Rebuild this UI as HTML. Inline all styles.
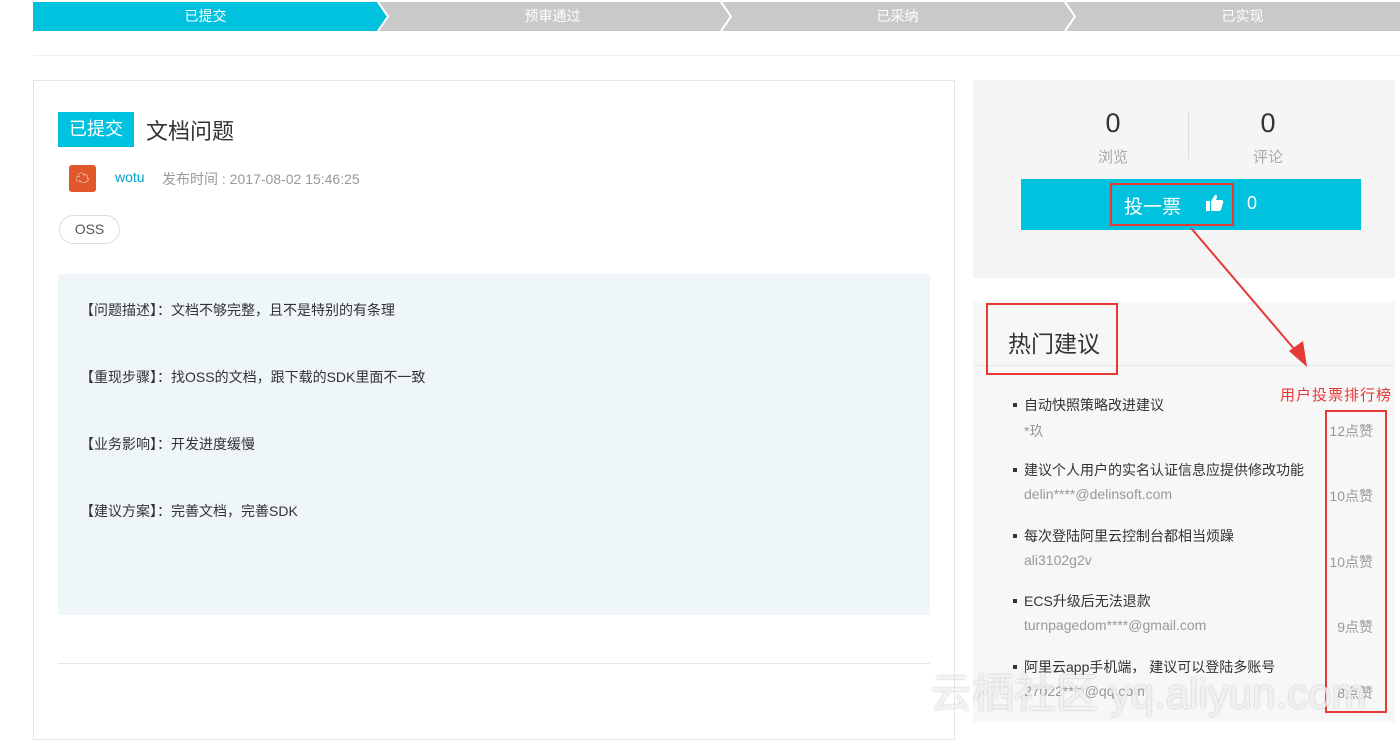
<!DOCTYPE html><html><head><meta charset="utf-8"><style>
*{margin:0;padding:0;box-sizing:border-box}
body{width:1400px;height:720px;overflow:hidden;background:#fff;font-family:"Liberation Sans","Noto Sans CJK SC",sans-serif;position:relative;color:#333}
.a{position:absolute}
.step{top:2px;height:29px;color:#fff;font-size:14px;line-height:29px;text-align:center}
.it{position:absolute;left:1024px;font-size:14px;color:#333}
.it:before{content:"";position:absolute;left:-11px;top:8px;width:4px;height:4px;background:#333}
.us{position:absolute;left:1024px;font-size:14px;color:#999}
.ct{position:absolute;right:27px;font-size:14px;color:#999}
.d{position:absolute;left:80px;font-size:14px;color:#333}
</style></head><body>
<svg class="a" style="left:33px;top:2px" width="1367" height="29">
<rect x="0" y="0" width="1367" height="29" fill="#c9c9c9"/>
<polygon points="0,0 345,0 355,14.5 345,29 0,29" fill="#00c1de"/>
<polyline points="345,0 355,14.5 345,29" fill="none" stroke="#fff" stroke-width="2"/>
<polyline points="688,0 698,14.5 688,29" fill="none" stroke="#fff" stroke-width="2"/>
<polyline points="1032,0 1042,14.5 1032,29" fill="none" stroke="#fff" stroke-width="2"/>
</svg>
<div class="a step" style="left:33px;width:345px">已提交</div>
<div class="a step" style="left:380px;width:345px">预审通过</div>
<div class="a step" style="left:725px;width:345px">已采纳</div>
<div class="a step" style="left:1070px;width:345px">已实现</div>
<div class="a" style="left:33px;top:55px;width:1367px;height:1px;background:#eee"></div>

<div class="a" style="left:33px;top:80px;width:922px;height:660px;border:1px solid #e6e6e6"></div>
<div class="a" style="left:58px;top:112px;width:76px;height:35px;background:#00c1de;color:#fff;font-size:18px;line-height:35px;text-align:center">已提交</div>
<div class="a" style="left:146px;top:114px;font-size:22px;color:#333">文档问题</div>
<div class="a" style="left:69px;top:165px;width:27px;height:27px;background:#e0572a;border-radius:3px;color:#fff;font-size:14px;text-align:center;line-height:27px">☁</div>
<div class="a" style="left:115px;top:169px;font-size:14px;color:#00a2ca">wotu</div>
<div class="a" style="left:162px;top:169px;font-size:14px;color:#999">发布时间 : 2017-08-02 15:46:25</div>
<div class="a" style="left:59px;top:215px;width:61px;height:29px;border:1px solid #ddd;border-radius:15px;font-size:14px;line-height:27px;text-align:center;color:#555">OSS</div>
<div class="a" style="left:58px;top:274px;width:872px;height:341px;background:#eef6fa"></div>
<div class="d" style="top:300px">【问题描述】：文档不够完整，且不是特别的有条理</div>
<div class="d" style="top:367px">【重现步骤】：找OSS的文档，跟下载的SDK里面不一致</div>
<div class="d" style="top:434px">【业务影响】：开发进度缓慢</div>
<div class="d" style="top:501px">【建议方案】：完善文档，完善SDK</div>
<div class="a" style="left:58px;top:663px;width:872px;height:1px;background:#e6e6e6"></div>

<div class="a" style="left:973px;top:80px;width:422px;height:198px;background:#f5f5f5"></div>
<div class="a" style="left:1060px;top:108px;width:106px;text-align:center;font-size:27px;color:#333">0</div>
<div class="a" style="left:1060px;top:146px;width:106px;text-align:center;font-size:15px;color:#aaa">浏览</div>
<div class="a" style="left:1188px;top:111px;width:1px;height:48px;background:#ddd"></div>
<div class="a" style="left:1215px;top:108px;width:106px;text-align:center;font-size:27px;color:#333">0</div>
<div class="a" style="left:1215px;top:146px;width:106px;text-align:center;font-size:15px;color:#aaa">评论</div>
<div class="a" style="left:1021px;top:179px;width:340px;height:51px;background:#00c1de"></div>
<div class="a" style="left:1110px;top:183px;width:124px;height:43px;border:2px solid #e53935"></div>
<div class="a" style="left:1124px;top:192px;font-size:19px;color:#fff">投一票</div>
<svg class="a" style="left:1205px;top:193px" width="20" height="20" viewBox="0 0 20 20"><rect x="1" y="8" width="4" height="10" fill="#fff"/><path d="M6 8 L10 2 Q12 1 12 4 L11 7 L17 7 Q19 8 18 10 L16 17 Q15 18 13 18 L6 18 Z" fill="#fff"/></svg>
<div class="a" style="left:1247px;top:193px;font-size:18px;color:#fff">0</div>

<div class="a" style="left:973px;top:302px;width:422px;height:420px;background:#f7f7f7"></div>
<div class="a" style="left:973px;top:365px;width:422px;height:1px;background:#e8e8e8"></div>
<div class="a" style="left:986px;top:303px;width:132px;height:72px;border:2px solid #e53935"></div>
<div class="a" style="left:1008px;top:325px;font-size:23px;color:#333">热门建议</div>
<svg class="a" style="left:1185px;top:225px" width="130" height="145"><line x1="6" y1="3" x2="116" y2="132" stroke="#e53935" stroke-width="2"/><polygon points="122,142 104,126 118,116" fill="#e53935"/></svg>
<div class="a" style="left:1280px;top:384px;font-size:15px;color:#e53935;letter-spacing:1px">用户投票排行榜</div>
<div class="a" style="left:1325px;top:410px;width:62px;height:303px;border:2px solid #e53935"></div>
<div class="it" style="top:395px">自动快照策略改进建议</div><div class="us" style="top:421px">*玖</div><div class="ct" style="top:421px">12点赞</div>
<div class="it" style="top:460px">建议个人用户的实名认证信息应提供修改功能</div><div class="us" style="top:486px">delin****@delinsoft.com</div><div class="ct" style="top:486px">10点赞</div>
<div class="it" style="top:526px">每次登陆阿里云控制台都相当烦躁</div><div class="us" style="top:552px">ali3102g2v</div><div class="ct" style="top:552px">10点赞</div>
<div class="it" style="top:591px">ECS升级后无法退款</div><div class="us" style="top:617px">turnpagedom****@gmail.com</div><div class="ct" style="top:617px">9点赞</div>
<div class="it" style="top:657px">阿里云app手机端， 建议可以登陆多账号</div><div class="us" style="top:683px">27022****@qq.com</div><div class="ct" style="top:683px">8点赞</div>
<div class="a" style="left:930px;top:660px;font-size:42px;color:rgba(255,255,255,.75);text-shadow:0 0 2px rgba(0,0,0,.25);white-space:nowrap">云栖社区 yq.aliyun.com</div>
</body></html>
